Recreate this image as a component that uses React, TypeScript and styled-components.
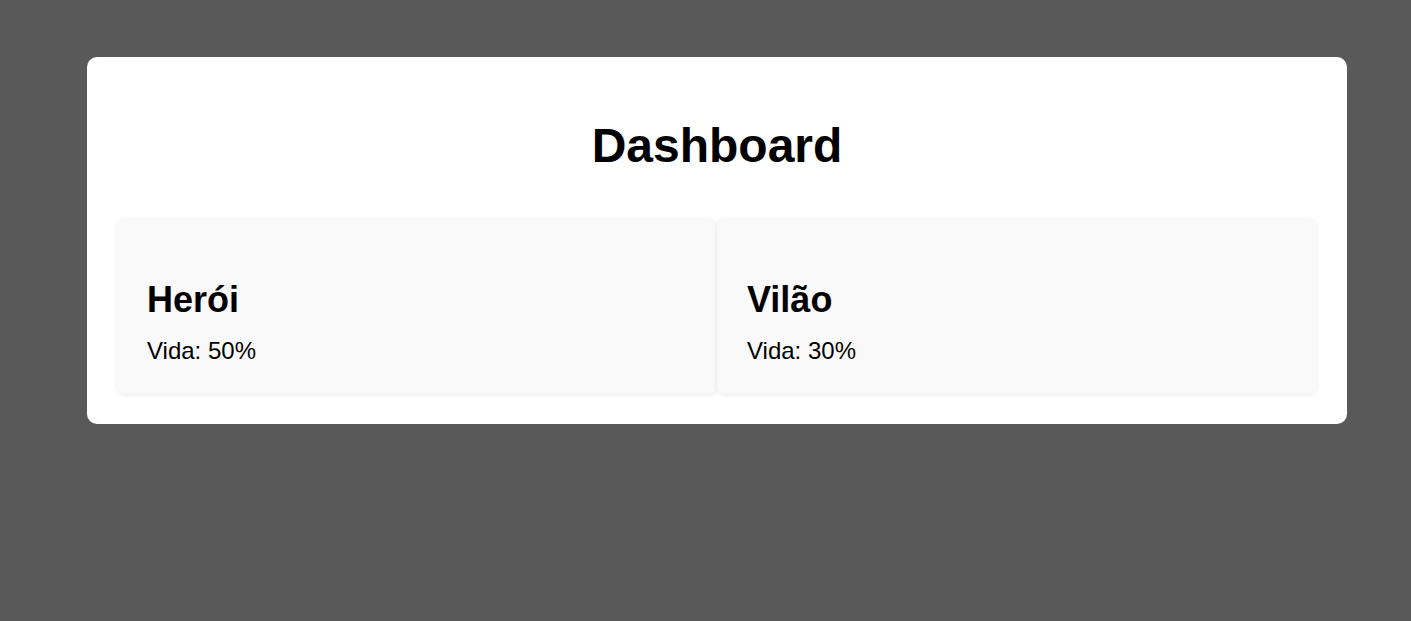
import React from "react";
import styled, { createGlobalStyle } from "styled-components";

const GlobalStyle = createGlobalStyle`
    html, body {
        margin: 0;
        padding: 0;
        background: #595959;
        font-family: "Liberation Sans", Arial, sans-serif;
        color: #000;
    }
`;

const Page = styled.div`
    min-height: 621px;
    padding: 57px 0 0 87px;
    box-sizing: border-box;
`;

const Panel = styled.main`
    width: 1260px;
    box-sizing: border-box;
    padding: 30px;
    background: #fff;
    border-radius: 10px;
`;

const Title = styled.h1`
    margin: 31px 0 46px;
    font-size: 48px;
    font-weight: bold;
    text-align: center;
`;

const CardRow = styled.div`
    display: flex;
`;

const Card = styled.section`
    flex: 1;
    height: 175px;
    box-sizing: border-box;
    padding: 30px;
    background: #f9f9f9;
    border-radius: 8px;
    box-shadow: 0 1px 5px rgba(0, 0, 0, 0.08);
`;

const CardTitle = styled.h2`
    margin: 30px 0 16px;
    font-size: 36px;
    font-weight: bold;
`;

const Stat = styled.p`
    margin: 0;
    font-size: 24px;
`;

interface Character {
    name: string;
    life: number;
}

const characters: Character[] = [
    { name: "Herói", life: 50 },
    { name: "Vilão", life: 30 },
];

const App = () => {
    return (
        <>
            <GlobalStyle />
            <Page>
                <Panel>
                    <Title>Dashboard</Title>
                    <CardRow>
                        {characters.map((c) => (
                            <Card key={c.name}>
                                <CardTitle>{c.name}</CardTitle>
                                <Stat>Vida: {c.life}%</Stat>
                            </Card>
                        ))}
                    </CardRow>
                </Panel>
            </Page>
        </>
    );
};

export default App;
